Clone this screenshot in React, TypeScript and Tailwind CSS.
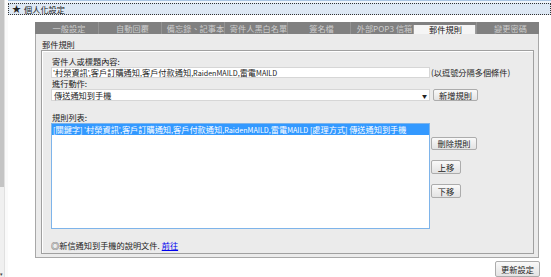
const tabs = ['一般設定', '自動回覆', '備忘錄、記事本', '寄件人黑白名單', '簽名檔', '外部POP3 信箱', '郵件規則', '變更密碼'];
const active = '郵件規則';

// latin runs are drawn a little smaller, the old page font has very narrow latin glyphs
function Mixed({ text }: { text: string }) {
    const parts = text.match(/[\x00-\x7f]+|[^\x00-\x7f]+/g) || [];
    return (
        <span>
            {parts.map((p, i) =>
                /^[\x00-\x7f]/.test(p) ? <span key={i} className="text-[7.2px]">{p}</span> : <span key={i}>{p}</span>
            )}
        </span>
    );
}

function Btn({ label, className = '' }: { label: string; className?: string }) {
    return (
        <button className={`flex items-center justify-center border border-[#acacac] rounded-[2px] bg-linear-to-b from-[#f9f9f9] to-[#e3e3e3] text-[#222] leading-none ${className}`}>
            {label}
        </button>
    );
}

export default function App() {
    return (
        <div className="w-[551px] h-[277px] bg-white flex overflow-hidden font-['Liberation_Sans_Narrow','Noto_Sans_CJK_TC',sans-serif] text-[8.2px] leading-none text-[#222]">
            {/* cut-off scrollbar on the left */}
            <div className="w-[4px] flex flex-col bg-[#f0f0f0]">
                <div className="h-[187px] bg-[#c4c4c4]" />
                <div className="flex-1" />
                <div className="h-[8px] text-[5px] text-[#444] flex items-center">▾</div>
            </div>
            <div className="w-[4px] border-l border-[#e0e0e0] bg-[#fafafa]" />

            <div className="flex-1 flex flex-col">
                <div className="h-[3px] border-t border-[#a9c5e3] bg-[#eef4fa]" />
                <div className="h-[14px] border border-dotted border-[#333] bg-[#dde8f4] flex items-center gap-[3px] pl-[3px]">
                    <span className="text-[9px]">★</span>
                    <span>個人化設定</span>
                </div>

                <div className="ml-[27px] mt-[7px] w-[504px]">
                    <div className="flex h-[12px] bg-[#808080]">
                        {tabs.map((t, i) =>
                            t === active ? (
                                <div key={t} className="relative w-[63px] h-[9px] mt-[3px] bg-[#f5f5f5] border-x border-[#9c9c9c] text-[#111] flex items-center justify-center pl-[2px] whitespace-nowrap">
                                    {t}
                                </div>
                            ) : (
                                <div key={t} className={`w-[63px] flex items-center justify-center pl-[5px] whitespace-nowrap text-[#cdcdcd] ${i > 0 ? 'border-l border-[#949494]' : ''}`}>
                                    {t}
                                </div>
                            )
                        )}
                    </div>

                    <div className="h-[224px] border-x border-b border-[#a8a8a8] bg-[#ebebeb] pl-[5px] pr-[4px] pt-[4px]">
                        <div className="h-[12px] pl-[1px] flex items-center">郵件規則</div>
                        <div className="h-[204px] border border-[#a0a0a0] shadow-[inset_1px_1px_0_#ffffff] pl-[9px] pt-[5px] flex flex-col">
                            <div className="h-[11px] pl-[1px] flex items-center">寄件人或標題內容:</div>
                            <div className="h-[11px] flex items-center">
                                <div className="w-[379px] h-[11px] bg-white border border-[#d6d6d6] px-[1px] flex items-center whitespace-nowrap">
                                    <Mixed text="'村榮資訊',客戶訂購通知,客戶付款通知,RaidenMAILD,雷電MAILD" />
                                </div>
                                <span className="ml-[1px] whitespace-nowrap">(以逗號分隔多個條件)</span>
                            </div>
                            <div className="h-[11px] pl-[1px] flex items-center">進行動作:</div>
                            <div className="h-[12px] flex items-center">
                                <div className="w-[379px] h-[12px] bg-white border border-[#d6d6d6] px-[2px] flex items-center justify-between">
                                    <span>傳送通知到手機</span>
                                    <span className="text-[5px]">▼</span>
                                </div>
                                <Btn label="新增規則" className="ml-[3px] w-[45px] h-[12px]" />
                            </div>
                            <div className="h-[11px] mt-[11px] pl-[1px] flex items-center">規則列表:</div>
                            <div className="flex">
                                <div className="w-[379px] h-[106px] border border-[#7eb4ea] bg-white">
                                    <div className="h-[11px] bg-[#3399ff] text-white px-[1px] flex items-center whitespace-nowrap">
                                        <Mixed text="[關鍵字] '村榮資訊',客戶訂購通知,客戶付款通知,RaidenMAILD,雷電MAILD [處理方式] 傳送通知到手機" />
                                    </div>
                                </div>
                                <div className="ml-[1px] pt-[14px] flex flex-col items-start gap-[10px]">
                                    <Btn label="刪除規則" className="w-[46px] h-[13px]" />
                                    <Btn label="上移" className="w-[30px] h-[14px]" />
                                    <Btn label="下移" className="w-[30px] h-[14px]" />
                                </div>
                            </div>
                            <div className="h-[11px] mt-[11px] flex items-center">
                                <span>◎新信通知到手機的說明文件. </span>
                                <a href="#" className="ml-[2px] text-[#0000ee] underline">前往</a>
                            </div>
                        </div>
                    </div>

                    <div className="w-[505px] flex justify-end mt-[3px]">
                        <Btn label="更新設定" className="w-[45px] h-[16px]" />
                    </div>
                </div>
            </div>
        </div>
    );
}
